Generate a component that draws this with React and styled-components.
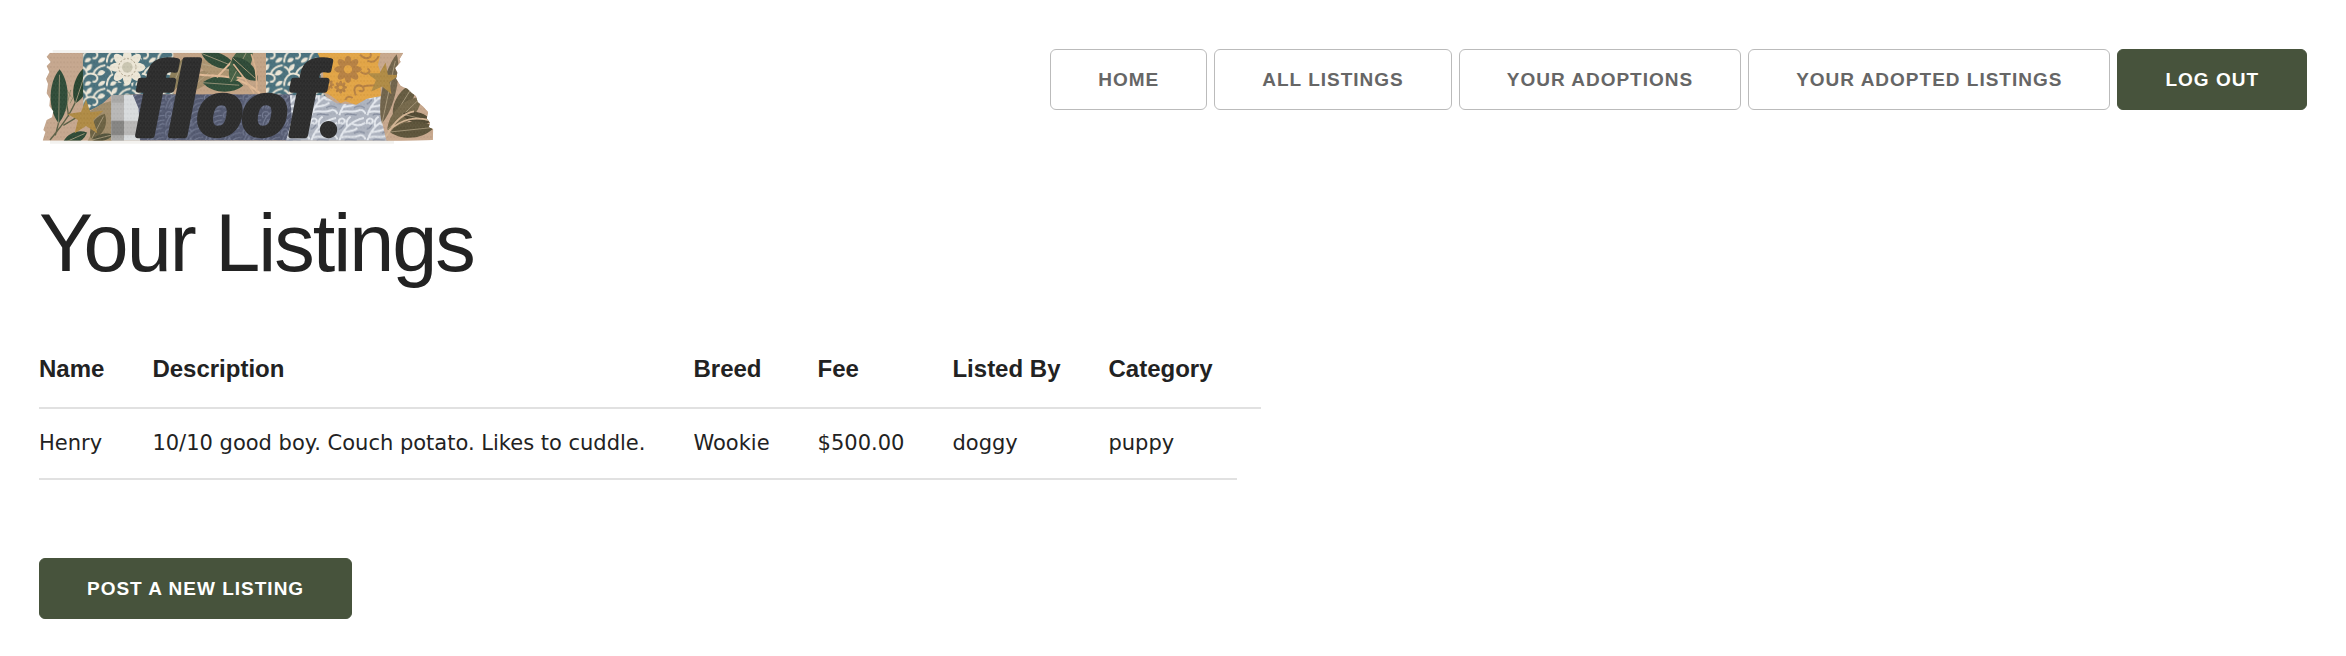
import React from "react";
import styled, { createGlobalStyle } from "styled-components";

const GlobalStyle = createGlobalStyle`
  * { box-sizing: border-box; }
  body {
    margin: 0;
    background: #fff;
    color: #222;
    font-family: "Liberation Sans", Arial, sans-serif;
  }
`;

const Page = styled.div`
  padding: 45px 39px 38px;
`;

const Header = styled.header`
  display: flex;
  justify-content: space-between;
  align-items: flex-start;
`;

const LogoLink = styled.a`
  display: block;
  flex: none;
`;

const LogoArt = styled.svg`
  display: block;
  width: 400px;
  height: 105px;
  overflow: visible;
`;

const Wordmark = styled.text`
  font: italic bold 312px "Liberation Sans", Arial, sans-serif;
  fill: #2b2b2b;
  stroke: #2b2b2b;
  stroke-width: 16px;
  stroke-linejoin: round;
`;

const Bowls = styled.tspan`
  font-size: 220px;
`;

const Dot = styled.tspan`
  font-family: Lato, sans-serif;
  font-weight: 900;
  font-size: 220px;
`;

const Nav = styled.nav`
  display: flex;
  gap: 7px;
  padding-top: 4px;
`;

const Button = styled.button`
  height: 61px;
  padding: 0 47px;
  border: 1px solid ${(p) => (p.$primary ? "#47533c" : "#bbb")};
  border-radius: 6px;
  background: ${(p) => (p.$primary ? "#47533c" : "#fff")};
  color: ${(p) => (p.$primary ? "#fff" : "#666")};
  font: bold 19px "Liberation Sans", Arial, sans-serif;
  letter-spacing: 1px;
  text-transform: uppercase;
  white-space: nowrap;
  cursor: pointer;
`;

const Title = styled.h1`
  margin: 45px 0 40px;
  font-size: 81px;
  font-weight: 400;
  line-height: 96px;
  letter-spacing: -2px;
`;

const Table = styled.table`
  border-collapse: separate;
  border-spacing: 0;
  text-align: left;
`;

const HeadCell = styled.th`
  padding: 19px 24px;
  border-bottom: 2px solid #e1e1e1;
  font-size: 24px;
  line-height: 38px;
  &:first-child { padding-left: 0; }
`;

const EndCell = styled.td`
  padding: 0 0 0 24px;
  border-bottom: 2px solid #e1e1e1;
`;

const Cell = styled.td`
  padding: 19px 24px;
  border-bottom: 2px solid #e1e1e1;
  font-family: "DejaVu Sans", Verdana, sans-serif;
  font-size: 21px;
  line-height: 31px;
  &:first-child { padding-left: 0; }
`;

const Actions = styled.div`
  margin-top: 78px;
`;

const navItems = ["Home", "All Listings", "Your Adoptions", "Your Adopted Listings"];
const columns = ["Name", "Description", "Breed", "Fee", "Listed By", "Category"];
const listings = [
  ["Henry", "10/10 good boy. Couch potato. Likes to cuddle.", "Wookie", "$500.00", "doggy", "puppy"],
];

/* A pointed leaf of length l and width w growing from (x, y) at angle a. */
const Leaf = ({ x, y, l, w, a, fill, vein = "#b9a88a" }) => (
  <g transform={`translate(${x} ${y}) rotate(${a})`}>
    <path d={`M0 0C${l * 0.25} ${-w} ${l * 0.75} ${-w} ${l} 0C${l * 0.75} ${w} ${l * 0.25} ${w} 0 0Z`} fill={fill} />
    <path d={`M0 0H${l * 0.9}`} stroke={vein} strokeWidth="2" />
  </g>
);

const Bloom = ({ x, y, r, fill, core }) => (
  <g transform={`translate(${x} ${y})`}>
    {[0, 45, 90, 135, 180, 225, 270, 315].map((a) => (
      <ellipse key={a} cx={r * 0.6} rx={r * 0.48} ry={r * 0.27} transform={`rotate(${a})`} fill={fill} />
    ))}
    <circle r={r * 0.32} fill={core} />
  </g>
);

const starPoints = "0,-54 13,-15 52,-20 22,8 34,48 0,26 -34,48 -24,8 -56,-10 -15,-16";

const Logo = () => (
  <LogoArt viewBox="27 15 1200 315" role="img" aria-label="floof.">
    <defs>
      <clipPath id="tape">
        <path d="M60 38H1120L1108 58L1112 66L1095 84L1102 98L1098 116L1112 138L1132 146L1146 160L1158 168L1163 186L1180 200L1194 216L1190 236L1200 248L1196 262L1210 268L1208 300L1110 302H38L46 276L40 270L50 240L66 232L70 214L58 198L60 176L50 160L54 132L48 116L58 96L50 78L62 66L50 50Z" />
      </clipPath>
      <clipPath id="navy"><path d="M308 163H790V302H330L326 206Z" /></clipPath>
      <clipPath id="teal"><path d="M158 38H432V163H320L245 166L212 196L160 220Z M706 38H872V150L890 172H700L695 120Z" /></clipPath>
      <pattern id="scrolls" width="58" height="52" patternUnits="userSpaceOnUse">
        <path d="M2 50C8 20 24 6 48 4M10 48C18 28 30 18 56 18M22 50C30 36 40 32 56 32M4 26C-4 14 6 4 16 8C24 14 14 24 8 18M38 50C42 44 50 42 57 44M16 30C24 36 20 48 14 52" fill="none" stroke="#747b92" strokeWidth="3" />
      </pattern>
      <pattern id="fronds" width="84" height="76" patternUnits="userSpaceOnUse">
        <path d="M4 74C14 42 34 16 78 6M14 50C24 44 44 50 58 36M28 32C24 20 28 8 38 2M42 22C54 30 70 28 82 20M10 64C30 58 44 68 60 60C70 54 78 60 83 70M4 24C-2 10 12 2 20 12C22 24 10 26 8 18" fill="none" stroke="#e4e8ee" strokeWidth="6" />
        <path d="M20 74C28 64 46 76 56 72M48 52C60 44 72 46 80 52M2 40C12 38 14 30 18 26" fill="none" stroke="#858d9f" strokeWidth="4" />
      </pattern>
      <pattern id="vine" width="76" height="70" patternUnits="userSpaceOnUse">
        <path d="M2 68C4 40 20 26 38 32C58 38 50 60 36 54M38 32C44 16 56 8 74 6M20 34C18 20 10 12 2 10" fill="none" stroke="#ece6d6" strokeWidth="6" />
        <path d="M50 34C56 18 64 18 74 26C68 34 62 40 50 34ZM18 24C14 8 24 2 34 2C34 14 32 20 18 24ZM12 66C14 54 22 50 32 56C28 64 24 70 12 66ZM52 68C54 56 64 50 74 54C72 64 64 70 52 68Z" fill="#ece6d6" />
      </pattern>
      <pattern id="weave" width="10" height="14" patternUnits="userSpaceOnUse">
        <path d="M2 0V8M7 5V14" stroke="#fff" strokeWidth="2" opacity=".08" />
        <path d="M0 11H6" stroke="#000" strokeWidth="2" opacity=".08" />
      </pattern>
    </defs>
    <path d="M68 30H1110V38H68ZM60 300H1092V311H60Z" fill="#f3f2ef" />
    <g clipPath="url(#tape)">
      <path d="M30 30H1220V310H30Z" fill="#c5a68d" />
      <path d="M60 300C90 262 128 220 150 150M76 286L88 240M100 256L150 226M116 230L110 190" fill="none" stroke="#5b6045" strokeWidth="4" />
      <path d="M106 214L122 150M120 190L146 140M124 172L108 146M132 164L154 158" fill="none" stroke="#8b8a68" strokeWidth="3" />
      <Leaf x={86} y={250} l={162} w={34} a={-89} fill="#2e4b37" />
      <Leaf x={136} y={190} l={120} w={28} a={-72} fill="#28442f" />
      <Leaf x={98} y={310} l={80} w={22} a={-24} fill="#2d4935" />
      <g clipPath="url(#teal)">
        <path d="M150 30H900V230H150Z" fill="#48707c" />
        <path d="M150 30H900V230H150Z" fill="url(#vine)" />
        <circle cx="292" cy="82" r="48" fill="#48707c" />
        <Bloom x={292} y={82} r={50} fill="#ece6d6" core="#c9c5b0" />
        <circle cx="292" cy="82" r="26" fill="none" stroke="#ab9f89" strokeWidth="3" strokeDasharray="6 5" />
      </g>
      <path d="M176 216L214 192L246 182V304H172L190 270Z" fill="#a08c6a" />
      <Leaf x={184} y={298} l={86} w={26} a={-62} fill="#6b6142" />
      <Leaf x={186} y={300} l={64} w={14} a={-14} fill="#51513a" />
      <path d="M244 165H330V304H244Z" fill="#d8dbdd" />
      <path d="M244 165H282V304H244Z" fill="#a8a7a5" />
      <path d="M244 188H282V242H244ZM282 242H330V286H282Z" fill="#b8b7b6" />
      <path d="M244 242H282V286H244Z" fill="#858482" />
      <path d="M430 38H708V164H430Z" fill="#c2a284" />
      <Leaf x={420} y={158} l={110} w={26} a={-68} fill="#8b7d58" />
      <Leaf x={478} y={150} l={92} w={26} a={-42} fill="#a28b68" />
      <Leaf x={494} y={66} l={134} w={30} a={14} fill="#ad9470" />
      <Leaf x={514} y={40} l={110} w={28} a={22} fill="#2d4a36" />
      <Leaf x={518} y={128} l={122} w={30} a={4} fill="#2f4d38" />
      <path d="M490 100C540 116 610 88 690 160M560 112L610 60" fill="none" stroke="#e1ba96" strokeWidth="6" />
      <Leaf x={602} y={126} l={130} w={38} a={-62} fill="#456044" />
      <Leaf x={606} y={52} l={104} w={30} a={42} fill="#2d4936" vein="#d3b48e" />
      <path d="M672 160C650 122 630 96 610 72M680 156C682 108 676 74 664 42M646 116L620 112" stroke="#d9b28e" strokeWidth="5" fill="none" />
      <g clipPath="url(#navy)">
        <path d="M300 160H800V304H300Z" fill="#52586f" />
        <path d="M300 160H800V304H300Z" fill="url(#scrolls)" />
      </g>
      <path d="M780 166H880L920 190L980 194L1010 176L1052 166L1064 230L1074 304H768L786 238Z" fill="#adb3bf" />
      <path d="M780 166H880L920 190L980 194L1010 176L1052 166L1064 230L1074 304H768L786 238Z" fill="url(#fronds)" />
      <path d="M862 38H1052L1044 74L1056 112L1054 168L1010 176L978 194L946 184L932 190L904 168L882 156L878 70Z" fill="#e2a545" />
      <g opacity=".75">
        <Bloom x={954} y={88} r={38} fill="#a77542" core="#e2a545" />
        <Bloom x={932} y={142} r={18} fill="#a77542" core="#e2a545" />
        <Bloom x={896} y={134} r={15} fill="#a77542" core="#e2a545" />
        <path d="M990 44C1010 66 1030 48 1020 40M1012 62C1030 70 1042 60 1046 48M992 96C1012 110 1028 92 1012 86M978 166C966 142 980 130 998 140C1008 154 990 158 988 150M1000 140C1020 132 1036 144 1042 126M946 180C950 168 960 168 968 174" fill="none" stroke="#a77542" strokeWidth="6" />
      </g>
      <path d="M1052 38H1125L1098 92L1120 146L1210 230V304H1070L1052 230Z" fill="#c7a78c" />
      <Leaf x={1056} y={250} l={212} w={28} a={-78} fill="#70634a" />
      <Leaf x={1090} y={232} l={120} w={30} a={-58} fill="#645a3f" />
      <Leaf x={1072} y={270} l={142} w={34} a={-44} fill="#75684a" />
      <Leaf x={1116} y={222} l={92} w={22} a={14} fill="#514932" />
      <Leaf x={1080} y={276} l={134} w={32} a={-6} fill="#5c5339" />
      <path d="M1068 290C1094 240 1120 220 1152 214M1078 270C1120 236 1150 230 1198 240" fill="none" stroke="#d3b493" strokeWidth="5" />
      <g fill="#af8a43">
        <polygon points={starPoints} transform="translate(168 232)" />
        <polygon points={starPoints} transform="translate(1060 116) rotate(8) scale(.9)" />
      </g>
    </g>
    <Wordmark x="312" y="284">fl<Bowls>oo</Bowls>f<Dot>.</Dot></Wordmark>
    <g clipPath="url(#tape)"><path d="M30 30H1220V310H30Z" fill="url(#weave)" /></g>
  </LogoArt>
);

export default function App() {
  return (
    <>
      <GlobalStyle />
      <Page>
        <Header>
          <LogoLink href="#"><Logo /></LogoLink>
          <Nav>
            {navItems.map((label) => (
              <Button key={label} type="button">{label}</Button>
            ))}
            <Button type="button" $primary>Log out</Button>
          </Nav>
        </Header>
        <main>
          <Title>Your Listings</Title>
          <Table>
            <thead>
              <tr>
                {columns.map((name) => <HeadCell key={name} scope="col">{name}</HeadCell>)}
                <EndCell />
              </tr>
            </thead>
            <tbody>
              {listings.map((row) => (
                <tr key={row[0]}>
                  {row.map((value, i) => <Cell key={columns[i]}>{value}</Cell>)}
                </tr>
              ))}
            </tbody>
          </Table>
          <Actions>
            <Button type="button" $primary>Post a new listing</Button>
          </Actions>
        </main>
      </Page>
    </>
  );
}
